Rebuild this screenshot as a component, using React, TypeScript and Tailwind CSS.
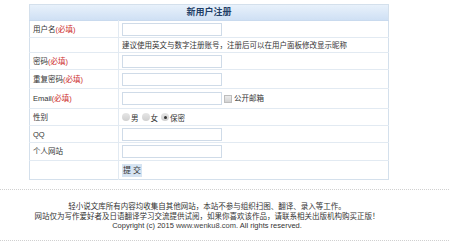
import React from "react";

const font = { fontFamily: '"Liberation Sans", "Noto Sans CJK SC", sans-serif' };

function Req() {
  return <span className="text-[#cc2a2a]">(必填)</span>;
}

function TextBox() {
  return <input type="text" className="block w-[100px] h-[13px] border border-[#cfdbe8] bg-white outline-none" />;
}

function Radio({ checked, label }: { checked?: boolean; label: string }) {
  return (
    <span className="flex items-center mr-[3px]">
      <span className="w-[8px] h-[8px] rounded-full bg-gradient-to-b from-[#e6e6e6] to-[#cfcfcf] flex items-center justify-center">
        {checked && <span className="w-[3px] h-[3px] rounded-full bg-[#333]" />}
      </span>
      <span className="ml-[1px] mt-[2px]">{label}</span>
    </span>
  );
}

export default function App() {
  const rowCls = "border-b border-[#e2eaf2]";
  const labelCls = "pl-[3px] border-r border-[#e2eaf2] w-[89px] align-middle";
  const valueCls = "pl-[3px] align-middle";

  return (
    <div className="w-[449px] h-[241px] bg-white text-[#333] text-[7.5px] leading-[9px] overflow-hidden" style={font}>
      <div className="h-[4px]" />
      <table className="ml-[29px] w-[360px] border border-[#d4e0ec] border-collapse">
        <tbody>
          <tr className="h-[16px] bg-gradient-to-b from-[#e8f1fb] to-[#cfe0f4] border-b border-[#c9daee]">
            <td colSpan={2} className="text-center font-bold text-[9px] text-[#1f3e66]">新用户注册</td>
          </tr>
          <tr className={`${rowCls} h-[17px]`}>
            <td className={labelCls}>用户名<Req /></td>
            <td className={valueCls}><TextBox /></td>
          </tr>
          <tr className={`${rowCls} h-[15px]`}>
            <td className={labelCls}></td>
            <td className={valueCls}>建议使用英文与数字注册账号，注册后可以在用户面板修改显示昵称</td>
          </tr>
          <tr className={`${rowCls} h-[17px]`}>
            <td className={labelCls}>密码<Req /></td>
            <td className={valueCls}><TextBox /></td>
          </tr>
          <tr className={`${rowCls} h-[19px]`}>
            <td className={labelCls}>重复密码<Req /></td>
            <td className={valueCls}><TextBox /></td>
          </tr>
          <tr className={`${rowCls} h-[20px]`}>
            <td className={labelCls}>Email<Req /></td>
            <td className={valueCls}>
              <div className="flex items-center">
                <TextBox />
                <span className="ml-[2px] w-[8px] h-[8px] border border-[#bdbdbd] bg-gradient-to-b from-[#ececec] to-[#d2d2d2]" />
                <span className="ml-[2px]">公开邮箱</span>
              </div>
            </td>
          </tr>
          <tr className={`${rowCls} h-[17px]`}>
            <td className={labelCls}>性别</td>
            <td className={valueCls}>
              <div className="flex items-center">
                <Radio label="男" />
                <Radio label="女" />
                <Radio label="保密" checked />
              </div>
            </td>
          </tr>
          <tr className={`${rowCls} h-[17px]`}>
            <td className={labelCls}>QQ</td>
            <td className={valueCls}><TextBox /></td>
          </tr>
          <tr className={`${rowCls} h-[18px]`}>
            <td className={labelCls}>个人网站</td>
            <td className={valueCls}><TextBox /></td>
          </tr>
          <tr className="h-[19px] border-t border-[#e9eef3]">
            <td className={labelCls}></td>
            <td className={valueCls}>
              <button className="block w-[20px] h-[13px] bg-[#d6e4f2] text-[8px] leading-[13px] text-[#333] text-center">提 交</button>
            </td>
          </tr>
        </tbody>
      </table>
      <div className="mt-[9px] border-t border-dotted border-[#d0d0d0]" />
      <div className="w-[414px] pt-[12px] pb-[9px] text-center leading-[9.5px] text-[#333]">
        <p>轻小说文库所有内容均收集自其他网站，本站不参与组织扫图、翻译、录入等工作。</p>
        <p>网站仅为写作爱好者及日语翻译学习交流提供试阅，如果你喜欢该作品，请联系相关出版机构购买正版！</p>
        <p>Copyright (c) 2015 <span className="text-[#444]">www.wenku8.com</span>. All rights reserved.</p>
      </div>
      <div className="border-t border-dotted border-[#d0d0d0]" />
    </div>
  );
}
